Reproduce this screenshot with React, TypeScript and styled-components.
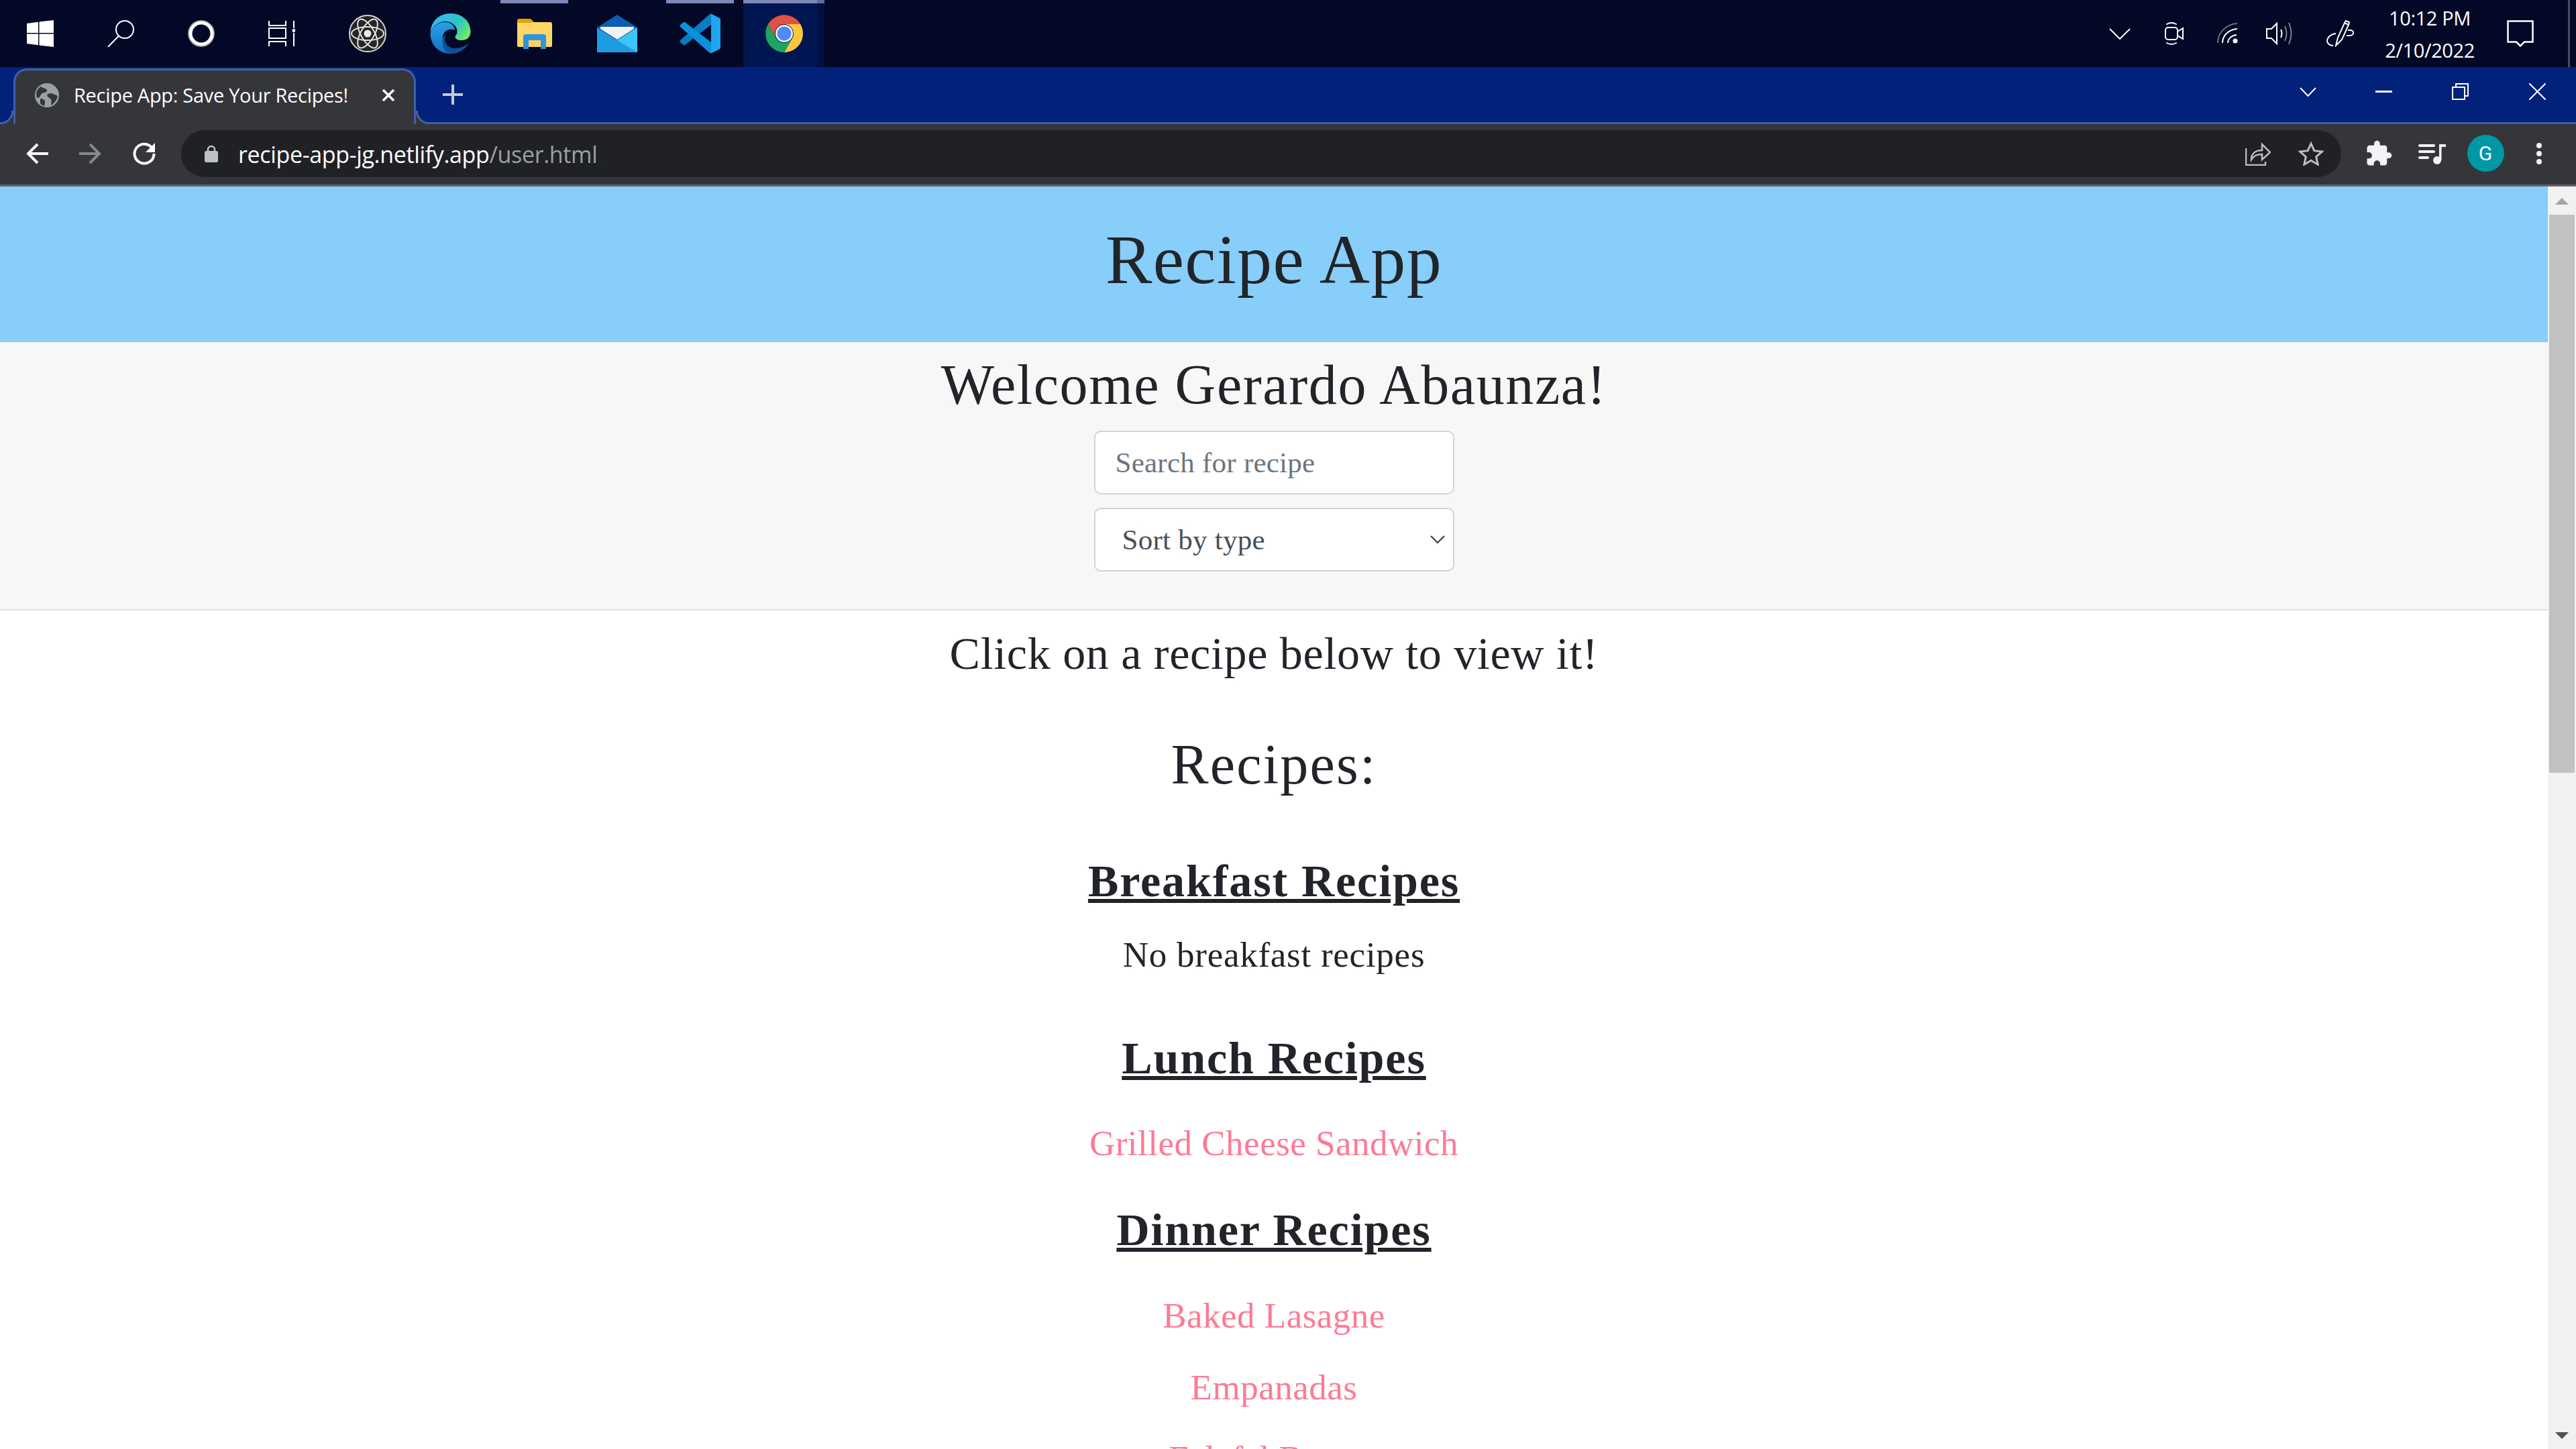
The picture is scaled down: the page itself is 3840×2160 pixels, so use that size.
import React from "react";
import styled, { createGlobalStyle } from "styled-components";

const GlobalStyle = createGlobalStyle`
  html, body {
    margin: 0;
    padding: 0;
    background: #fff;
  }
  body {
    font-family: "Liberation Serif", serif;
    color: #212529;
  }
`;

const Screen = styled.div`
  width: 3840px;
  height: 2160px;
  overflow: hidden;
  display: flex;
  flex-direction: column;
`;

/* ---------- windows taskbar ---------- */

const Taskbar = styled.div`
  height: 100px;
  flex: none;
  display: flex;
  align-items: center;
  background: #030826;
  font-family: "Open Sans", sans-serif;
  color: #fff;
`;

const TaskSlot = styled.div<{ $w: number; $open?: boolean; $active?: boolean; $mr?: number }>`
  position: relative;
  width: ${(p) => p.$w}px;
  height: 100px;
  flex: none;
  display: flex;
  align-items: center;
  justify-content: center;
  background: ${(p) =>
    p.$active ? "linear-gradient(to right, #001650 calc(100% - 11px), #001040 0)" : "transparent"};
  margin-right: ${(p) => p.$mr ?? 0}px;

  &::before {
    content: "";
    display: ${(p) => (p.$open || p.$active ? "block" : "none")};
    position: absolute;
    top: 0;
    left: ${(p) => (p.$active ? 0 : 14)}px;
    right: ${(p) => (p.$active ? 0 : 14)}px;
    height: 5px;
    background: ${(p) =>
      p.$active ? "linear-gradient(to right, #7b88b8 calc(100% - 11px), #5c6a9c 0)" : "#7b88b8"};
  }
`;

const Spacer = styled.div`
  flex: 1;
`;

const Clock = styled.div`
  width: 160px;
  height: 100px;
  flex: none;
  display: flex;
  flex-direction: column;
  align-items: center;
  justify-content: center;
  gap: 13px;
  font-size: 29px;
  line-height: 35px;
  letter-spacing: -0.4px;
`;

const DesktopEdge = styled.div`
  width: 19px;
  height: 100px;
  margin-left: 16px;
  flex: none;
  box-sizing: border-box;
  border-left: 3px solid #4a4d5e;
  margin-right: -7px;
`;

/* ---------- chrome tab strip ---------- */

const TabStrip = styled.div`
  height: 85px;
  flex: none;
  box-sizing: border-box;
  display: flex;
  align-items: center;
  background: #02217a;
  border-bottom: 3px solid #3f5fa8;
  padding-left: 20px;
  font-family: "Open Sans", sans-serif;
`;

const Tab = styled.div`
  position: relative;
  width: 600px;
  height: 83px;
  margin-top: 2px;
  margin-bottom: -3px;
  align-self: flex-end;
  flex: none;
  box-sizing: border-box;
  display: flex;
  align-items: center;
  padding: 0 28px 6px 29px;
  background: #35363a;
  border: 3px solid #3f5fa8;
  border-bottom: none;
  border-radius: 20px 20px 0 0;
  color: #fff;

  &::before,
  &::after {
    content: "";
    position: absolute;
    bottom: 0;
    width: 20px;
    height: 20px;
  }
  &::before {
    left: -23px;
    background: radial-gradient(circle at 0 0, transparent 17px, #3f5fa8 17.5px, #3f5fa8 20px, #35363a 20.5px);
  }
  &::after {
    right: -23px;
    background: radial-gradient(circle at 100% 0, transparent 17px, #3f5fa8 17.5px, #3f5fa8 20px, #35363a 20.5px);
  }
`;

const TabTitle = styled.span`
  flex: 1;
  margin-left: 22px;
  font-size: 29px;
  line-height: 36px;
  letter-spacing: -0.3px;
  white-space: nowrap;
`;

const NewTab = styled.div`
  width: 110px;
  margin-left: 0;
  display: flex;
  justify-content: center;
  flex: none;
`;

const WindowButton = styled.div<{ $w: number }>`
  width: ${(p) => p.$w}px;
  flex: none;
  display: flex;
  align-items: center;
  justify-content: center;
  padding-bottom: 9px;
`;

/* ---------- chrome toolbar ---------- */

const Toolbar = styled.div`
  height: 93px;
  flex: none;
  box-sizing: border-box;
  display: flex;
  align-items: center;
  padding: 0 16px 3px 15px;
  background: #35363a;
  border-bottom: 3px solid #5f6368;
  font-family: "Open Sans", sans-serif;
`;

const ToolButton = styled.div<{ $w: number }>`
  width: ${(p) => p.$w}px;
  flex: none;
  display: flex;
  align-items: center;
  justify-content: center;
`;

const AddressBar = styled.div`
  flex: 1;
  height: 70px;
  margin: 0 16px 0 15px;
  display: flex;
  align-items: center;
  padding: 0 6px 0 35px;
  background: #202124;
  border-radius: 35px;
`;

const Url = styled.div`
  flex: 1;
  margin-left: 30px;
  padding-top: 2px;
  font-size: 34px;
  line-height: 44px;
  letter-spacing: -0.35px;
  color: #fff;
`;

const UrlPath = styled.span`
  color: #9aa0a6;
`;

const Avatar = styled.div`
  width: 55px;
  height: 55px;
  border-radius: 50%;
  background: #0097a7;
  color: #fff;
  display: flex;
  align-items: center;
  justify-content: center;
  font-family: Roboto, sans-serif;
  font-size: 30px;
`;

/* ---------- page ---------- */

const Viewport = styled.div`
  flex: 1;
  min-height: 0;
  display: flex;
`;

const Page = styled.div`
  flex: 1;
  min-width: 0;
  overflow: hidden;
  text-align: center;
`;

const Header = styled.header`
  height: 232px;
  box-sizing: border-box;
  padding-top: 46px;
  background: #87cefa;
`;

const Title = styled.h1`
  margin: 0;
  font-size: 104px;
  font-weight: 400;
  line-height: 125px;
  letter-spacing: 1.4px;
`;

const Controls = styled.section`
  height: 400px;
  box-sizing: border-box;
  padding-top: 13px;
  background: #f7f7f7;
  border-bottom: 2px solid #dfdfdf;
  display: flex;
  flex-direction: column;
  align-items: center;
`;

const Welcome = styled.h2`
  margin: 0 0 18px;
  font-size: 84px;
  font-weight: 400;
  line-height: 101px;
  letter-spacing: 1.6px;
`;

const SearchInput = styled.input`
  width: 537px;
  height: 95px;
  box-sizing: border-box;
  padding: 0 30px;
  margin-bottom: 20px;
  background: #fff;
  border: 2.5px solid #ced4da;
  border-radius: 10px;
  font-family: "Liberation Serif", serif;
  font-size: 43px;
  letter-spacing: 0.25px;
  color: #495057;

  &::placeholder {
    color: #6c757d;
    opacity: 1;
  }
`;

const SortSelect = styled.select`
  width: 537px;
  height: 95px;
  box-sizing: border-box;
  padding: 0 40px;
  appearance: none;
  background: #fff
    url("data:image/svg+xml,%3csvg xmlns='http://www.w3.org/2000/svg' viewBox='0 0 22 13'%3e%3cpath fill='none' stroke='%23343a40' stroke-width='2' d='M1 1l10 10L21 1'/%3e%3c/svg%3e")
    no-repeat right 12px center / 22px 13px;
  border: 2.5px solid #ced4da;
  border-radius: 10px;
  font-family: "Liberation Serif", serif;
  font-size: 43px;
  letter-spacing: 0.25px;
  color: #495057;
`;

const Hint = styled.h3`
  margin: 20px 0 0;
  font-size: 68px;
  font-weight: 400;
  line-height: 88px;
  letter-spacing: 0.7px;
`;

const RecipesTitle = styled.h2`
  margin: 71px 0 0;
  font-size: 84px;
  font-weight: 400;
  line-height: 101px;
  letter-spacing: 2.2px;
`;

const CategoryTitle = styled.h4<{ $top: number }>`
  margin: ${(p) => p.$top}px 0 0;
  font-size: 68px;
  font-weight: 700;
  line-height: 79px;
  text-decoration: underline;
  letter-spacing: 1.9px;
`;

const Empty = styled.p`
  margin: 39px 0 0;
  font-size: 53px;
  line-height: 62px;
  letter-spacing: 0.75px;
`;

const RecipeLink = styled.a<{ $top: number }>`
  display: block;
  margin-top: ${(p) => p.$top}px;
  font-size: 53px;
  line-height: 62px;
  letter-spacing: 0.5px;
  color: #ff7a95;
  text-decoration: none;
`;

const Scrollbar = styled.div`
  width: 42px;
  flex: none;
  box-sizing: border-box;
  padding: 0 2px;
  background: #f1f1f1;
  display: flex;
  flex-direction: column;
  align-items: center;
`;

const ScrollArrow = styled.div<{ $down?: boolean }>`
  width: 0;
  height: 0;
  flex: none;
  border-left: 10px solid transparent;
  border-right: 10px solid transparent;
  ${(p) =>
    p.$down
      ? "border-top: 10px solid #505050; margin-top: auto; margin-bottom: 15px;"
      : "border-bottom: 10px solid #a3a3a3; margin-top: 17px;"}
`;

const ScrollThumb = styled.div`
  width: 38px;
  height: 832px;
  margin-top: 15px;
  flex: none;
  background: #c1c1c1;
`;

/* ---------- icons ---------- */

const WindowsIcon = () => (
  <svg width="40" height="40" viewBox="0 0 40 40" fill="#fff">
    <path d="M0 5l17-2.300V19H0zM18.500 2.400L40 0v19H18.500zM0 20.500h17v16.800L0 35zM18.500 20.500H40V40l-21.500-2.500z" />
  </svg>
);

const SearchIcon = () => (
  <svg width="40" height="40" viewBox="0 0 40 40" fill="none" stroke="#fff" strokeWidth="2">
    <circle cx="26" cy="14" r="13" />
    <path d="M16.500 24L1 40" />
  </svg>
);

const CortanaIcon = () => (
  <svg width="40" height="40" viewBox="0 0 40 40" fill="none">
    <circle cx="20" cy="20" r="19" stroke="#8a8c96" strokeWidth="2" />
    <circle cx="20" cy="20" r="16" stroke="#fff" strokeWidth="5" />
  </svg>
);

const TaskViewIcon = () => (
  <svg width="40" height="40" viewBox="0 0 40 40" fill="none" stroke="#fff" strokeWidth="2">
    <path d="M1 1v7h25V1M1 12h25v15H1zM1 39v-7h25v7M38 1v11M38 19v20" />
    <circle cx="38" cy="15.500" r="2.500" fill="#fff" stroke="none" />
  </svg>
);

const AtomIcon = () => (
  <svg width="56" height="56" viewBox="0 0 56 56" fill="none">
    <circle cx="28" cy="28" r="27" fill="#262626" stroke="#d6d6d6" strokeWidth="2" />
    <g stroke="#e2e2e2" strokeWidth="2">
      <ellipse cx="28" cy="28" rx="24" ry="10" />
      <ellipse cx="28" cy="28" rx="24" ry="10" transform="rotate(60 28 28)" />
      <ellipse cx="28" cy="28" rx="24" ry="10" transform="rotate(120 28 28)" />
    </g>
    <circle cx="28" cy="28" r="5.500" fill="#e8e8e8" />
  </svg>
);

const EdgeIcon = () => (
  <svg width="63" height="60" viewBox="0 0 60 60">
    <defs>
      <linearGradient id="edgeTop" x1="0.1" y1="0.2" x2="1" y2="0.7">
        <stop offset="0" stopColor="#33b9f2" />
        <stop offset="0.55" stopColor="#2bc3c6" />
        <stop offset="1" stopColor="#6fec63" />
      </linearGradient>
      <linearGradient id="edgeLeft" x1="0.5" y1="0" x2="0.6" y2="1">
        <stop offset="0" stopColor="#2a9fe2" />
        <stop offset="1" stopColor="#0f6fc6" />
      </linearGradient>
    </defs>
    <path
      d="M30 0c18 0 30 12 30 27 0 9-6 13-13 13-6 0-10-2-10-5 0-2 3-3 3-8 0-9-9-15-18-15C12 12 3 19 0 28 1 12 13 0 30 0z"
      fill="url(#edgeTop)"
    />
    <path
      d="M0 30c2-11 12-17 22-17 9 0 15 6 14 12-6-3-14-1-17 7-3 11 5 22 16 26-2 1.500-3 2-5 2C13 60 0 47 0 30z"
      fill="url(#edgeLeft)"
    />
    <path
      d="M22 35c-2 10 6 17 14 17 8 0 16-3 20-7 1 1 0 2-1 3-5 7-14 12-23 12-8 0-14-8-14-18 0-6 3-10 7-12-2 2-3 3-3 5z"
      fill="#0f4f94"
    />
  </svg>
);

const FolderIcon = () => (
  <svg width="52" height="45" viewBox="0 0 52 45">
    <path d="M0 3q0-3 3-3h17l5 5v4H0z" fill="#e2a200" />
    <path d="M0 7q0-1 1-1h19l5-1h24q3 0 3 3v32q0 2-2 2H2q-2 0-2-2z" fill="#ffd768" />
    <path d="M9 45V27q0-4 4-4h26q4 0 4 4v18h-8V32H17v13z" fill="#2f94db" />
    <path d="M17 32h18v10H17z" fill="#fcd25f" />
  </svg>
);

const MailIcon = () => (
  <svg width="60" height="56" viewBox="0 0 60 56">
    <path d="M30 0l30 19-30 19L0 19z" fill="#0b5fb0" />
    <path d="M5 19q0-1 1-1h48q1 0 1 1v2L30 37 5 21z" fill="#f2f2f2" />
    <path d="M0 19l30 19 30-19v37H0z" fill="#1f9be4" />
    <path d="M60 19v37L30 38z" fill="#3cc6f7" />
  </svg>
);

const VsCodeIcon = () => (
  <svg width="61" height="60" viewBox="0 0 61 60">
    <path d="M45 1h2v16L8 47q-1 1-2 0l-5-4v-3z" fill="#0a7cc1" />
    <path d="M6 13q1-1 2 0l39 30v16h-2L1 20v-3z" fill="#0b90da" />
    <path d="M46 0l12 6q3 1 3 4v40q0 3-3 4l-12 6 1-1V1z" fill="#1fa6f1" />
  </svg>
);

const ChromeIcon = () => (
  <svg width="56" height="56" viewBox="0 0 56 56">
    <path d="M4 14a28 28 0 0 1 48.200 0H28a14 14 0 0 0-12.100 21z" fill="#e05243" />
    <path d="M52.200 14A28 28 0 0 1 28 56l12.100-21A14 14 0 0 0 28 14z" fill="#fcc73f" />
    <path d="M28 56A28 28 0 0 1 4 14l11.900 21a14 14 0 0 0 24.200 0z" fill="#1ba561" />
    <circle cx="28" cy="28" r="13" fill="#f1f3f4" />
    <circle cx="28" cy="28" r="10.500" fill="#4f8bf5" />
  </svg>
);

const Chevron = ({ w, h, sw = 2 }: { w: number; h: number; sw?: number }) => (
  <svg width={w} height={h} viewBox={`0 0 ${w} ${h}`} fill="none" stroke="#fff" strokeWidth={sw}>
    <path d={`M1 1l${w / 2 - 1} ${h - 2}L${w - 1} 1`} />
  </svg>
);

const CameraIcon = () => (
  <svg width="28" height="36" viewBox="0 0 28 36" fill="none" stroke="#fff" strokeWidth="2">
    <rect x="1" y="9" width="18" height="18" rx="4" />
    <path d="M19 15l8-5v16l-8-5z" />
    <path d="M3 4q7-4 14 0M3 32q7 4 14 0" strokeLinecap="round" />
  </svg>
);

const WifiIcon = () => (
  <svg width="32" height="32" viewBox="0 0 32 32" fill="none" strokeWidth="2">
    <path d="M1 30C1 14 14 2 30 1" stroke="#6f717c" />
    <path d="M8 30C8 19 17 10 30 9" stroke="#fff" />
    <path d="M16 30c0-6 5-11 13-12" stroke="#fff" />
    <circle cx="27" cy="27" r="3.500" fill="#fff" />
  </svg>
);

const VolumeIcon = () => (
  <svg width="40" height="36" viewBox="0 0 40 36" fill="none" strokeWidth="2">
    <path d="M1 11h7l8-8v30l-8-8H1z" stroke="#fff" />
    <path d="M22 12q3 6 0 12" stroke="#fff" />
    <path d="M28 7q5 11 0 22" stroke="#7a7c86" />
    <path d="M34 2q7 16 0 32" stroke="#7a7c86" />
  </svg>
);

const PenIcon = () => (
  <svg width="42" height="40" viewBox="0 0 42 40" fill="none" stroke="#fff" strokeWidth="2">
    <path d="M14 38l3-12L27 4l6 3-10 22z" />
    <path d="M27 4l2-3 5 2-1 4" />
    <path d="M32 15h4q5 1 4 5-1 3-6 3h-4" />
    <path d="M14 20C6 21 1 26 1 31c0 4 4 7 9 7" />
  </svg>
);

const NotificationIcon = () => (
  <svg width="40" height="40" viewBox="0 0 40 40" fill="none" stroke="#fff" strokeWidth="2.500">
    <path d="M1.500 1.500h37v31H26l-6 6-6-6H1.500z" />
  </svg>
);

const GlobeIcon = () => (
  <svg width="36" height="36" viewBox="0 0 36 36" style={{ flex: "none" }}>
    <circle cx="18" cy="18" r="18" fill="#9aa0a6" />
    <path d="M9 5c4 3 8 2 9 6 0 4-6 2-8 5-3 3-2 6-7 6C1 14 3 9 9 5zM19 16c5-2 9 0 15 3-1 6-5 11-10 14 0-4 2-7-1-10-3-2-6-4-4-7zM8 23c3 0 6 1 7 4 0 2 0 5-1 7-3-1-5-2-6-4z" fill="#35363a" />
  </svg>
);

const TabClose = () => (
  <svg width="20" height="20" viewBox="0 0 20 20" stroke="#fff" strokeWidth="3.500" style={{ flex: "none" }}>
    <path d="M2 2l16 16M18 2L2 18" />
  </svg>
);

const PlusIcon = () => (
  <svg width="30" height="30" viewBox="0 0 30 30" stroke="#c7cbd1" strokeWidth="4">
    <path d="M15 0v30M0 15h30" />
  </svg>
);

const MinimizeIcon = () => (
  <svg width="25" height="3" viewBox="0 0 25 3" fill="#fff">
    <path d="M0 0h25v3H0z" />
  </svg>
);

const RestoreIcon = () => (
  <svg width="25" height="25" viewBox="0 0 25 25" fill="none" stroke="#fff" strokeWidth="2">
    <rect x="1" y="6" width="18" height="18" />
    <path d="M6 6V1h18v18h-5" />
  </svg>
);

const CloseIcon = () => (
  <svg width="25" height="25" viewBox="0 0 25 25" stroke="#fff" strokeWidth="2">
    <path d="M0 0l25 25M25 0L0 25" />
  </svg>
);

const ArrowIcon = ({ flip, color }: { flip?: boolean; color: string }) => (
  <svg width="34" height="32" viewBox="0 0 34 32" fill="none" stroke={color} strokeWidth="4" style={{ transform: flip ? "scaleX(-1)" : undefined }}>
    <path d="M34 16H4M18 2L4 16l14 14" />
  </svg>
);

const ReloadIcon = () => (
  <svg width="36" height="36" viewBox="0 0 36 36">
    <path d="M30 10A14.500 14.500 0 1 0 32.500 18" fill="none" stroke="#fff" strokeWidth="4" />
    <path d="M34 2v14H20z" fill="#fff" />
  </svg>
);

const LockIcon = () => (
  <svg width="20" height="26" viewBox="0 0 20 26" style={{ flex: "none" }}>
    <path d="M5 11V7a5 5 0 0 1 10 0v4" fill="none" stroke="#bdc1c6" strokeWidth="2.500" />
    <rect x="0" y="9" width="20" height="17" rx="2.500" fill="#bdc1c6" />
  </svg>
);

const ShareIcon = () => (
  <svg width="38" height="36" viewBox="0 0 38 36" fill="none" stroke="#bdbdbd" strokeWidth="2.500">
    <path d="M1 10v25h29v-5" />
    <path d="M9 27c0-9 6-14 16-14V4l12 12-12 11v-8c-8 0-12 2-16 8z" />
  </svg>
);

const StarIcon = () => (
  <svg width="38" height="36" viewBox="0 0 38 36" fill="none" stroke="#bdbdbd" strokeWidth="3">
    <path d="M19 3l4.800 10.700 11.700 1.200-8.800 7.800 2.500 11.500L19 28.300l-10.200 5.900 2.500-11.500L2.500 14.900l11.700-1.200z" />
  </svg>
);

const PuzzleIcon = () => (
  <svg width="42" height="42" viewBox="0 0 24 24" fill="#f1f3f4">
    <path d="M20.500 11H19V7c0-1.100-.9-2-2-2h-4V3.500C13 2.120 11.880 1 10.500 1S8 2.120 8 3.500V5H4c-1.100 0-1.990.9-1.990 2v3.800H3.500c1.490 0 2.700 1.210 2.700 2.700s-1.210 2.700-2.700 2.700H2V20c0 1.100.9 2 2 2h3.800v-1.500c0-1.490 1.210-2.700 2.700-2.700 1.490 0 2.700 1.210 2.700 2.700V22H17c1.100 0 2-.9 2-2v-4h1.500c1.380 0 2.500-1.120 2.500-2.500S21.880 11 20.500 11z" />
  </svg>
);

const MediaIcon = () => (
  <svg width="41" height="32" viewBox="0 0 41 32" fill="#f1f3f4">
    <rect x="0" y="2" width="25" height="4" rx="2" />
    <rect x="0" y="11" width="25" height="4" rx="2" />
    <rect x="0" y="20" width="16" height="4" rx="2" />
    <circle cx="28" cy="26" r="6" />
    <path d="M31 2h10v4h-6.500v20H31z" />
  </svg>
);

const DotsIcon = () => (
  <svg width="8" height="32" viewBox="0 0 8 32" fill="#f1f3f4">
    <circle cx="4" cy="4" r="4" />
    <circle cx="4" cy="16" r="4" />
    <circle cx="4" cy="28" r="4" />
  </svg>
);

export default function App() {
  return (
    <Screen>
      <GlobalStyle />
      <Taskbar>
        <TaskSlot $w={120}><WindowsIcon /></TaskSlot>
        <TaskSlot $w={120}><SearchIcon /></TaskSlot>
        <TaskSlot $w={120}><CortanaIcon /></TaskSlot>
        <TaskSlot $w={120} $mr={5}><TaskViewIcon /></TaskSlot>
        <TaskSlot $w={125}><AtomIcon /></TaskSlot>
        <TaskSlot $w={122}><EdgeIcon /></TaskSlot>
        <TaskSlot $w={129} $open><FolderIcon /></TaskSlot>
        <TaskSlot $w={118}><MailIcon /></TaskSlot>
        <TaskSlot $w={129} $open><VsCodeIcon /></TaskSlot>
        <TaskSlot $w={121} $active><ChromeIcon /></TaskSlot>
        <Spacer />
        <TaskSlot $w={80}><Chevron w={32} h={17} /></TaskSlot>
        <TaskSlot $w={82}><CameraIcon /></TaskSlot>
        <TaskSlot $w={78}><WifiIcon /></TaskSlot>
        <TaskSlot $w={76}><VolumeIcon /></TaskSlot>
        <TaskSlot $w={106}><PenIcon /></TaskSlot>
        <Clock>
          <span>10:12 PM</span>
          <span>2/10/2022</span>
        </Clock>
        <TaskSlot $w={110}><NotificationIcon /></TaskSlot>
        <DesktopEdge />
      </Taskbar>

      <TabStrip>
        <Tab>
          <GlobeIcon />
          <TabTitle>Recipe App: Save Your Recipes!</TabTitle>
          <TabClose />
        </Tab>
        <NewTab><PlusIcon /></NewTab>
        <Spacer />
        <WindowButton $w={112}><Chevron w={25} h={14} /></WindowButton>
        <WindowButton $w={114}><MinimizeIcon /></WindowButton>
        <WindowButton $w={115}><RestoreIcon /></WindowButton>
        <WindowButton $w={115}><CloseIcon /></WindowButton>
      </TabStrip>

      <Toolbar>
        <ToolButton $w={80}><ArrowIcon color="#fff" /></ToolButton>
        <ToolButton $w={80}><ArrowIcon flip color="#85888d" /></ToolButton>
        <ToolButton $w={80}><ReloadIcon /></ToolButton>
        <AddressBar>
          <LockIcon />
          <Url>
            recipe-app-jg.netlify.app<UrlPath>/user.html</UrlPath>
          </Url>
          <ToolButton $w={79}><ShareIcon /></ToolButton>
          <ToolButton $w={79}><StarIcon /></ToolButton>
        </AddressBar>
        <ToolButton $w={80}><PuzzleIcon /></ToolButton>
        <ToolButton $w={78}><MediaIcon /></ToolButton>
        <ToolButton $w={82}><Avatar>G</Avatar></ToolButton>
        <ToolButton $w={78}><DotsIcon /></ToolButton>
      </Toolbar>

      <Viewport>
        <Page>
          <Header>
            <Title>Recipe App</Title>
          </Header>
          <Controls>
            <Welcome>Welcome Gerardo Abaunza!</Welcome>
            <SearchInput placeholder="Search for recipe" />
            <SortSelect defaultValue="type">
              <option value="type">Sort by type</option>
            </SortSelect>
          </Controls>
          <Hint>Click on a recipe below to view it!</Hint>
          <RecipesTitle>Recipes:</RecipesTitle>
          <CategoryTitle $top={84}>Breakfast Recipes</CategoryTitle>
          <Empty>No breakfast recipes</Empty>
          <CategoryTitle $top={84}>Lunch Recipes</CategoryTitle>
          <RecipeLink $top={56}>Grilled Cheese Sandwich</RecipeLink>
          <CategoryTitle $top={59}>Dinner Recipes</CategoryTitle>
          <RecipeLink $top={57}>Baked Lasagne</RecipeLink>
          <RecipeLink $top={45}>Empanadas</RecipeLink>
          <RecipeLink $top={44}>Falafel Burger</RecipeLink>
        </Page>
        <Scrollbar>
          <ScrollArrow />
          <ScrollThumb />
          <ScrollArrow $down />
        </Scrollbar>
      </Viewport>
    </Screen>
  );
}
